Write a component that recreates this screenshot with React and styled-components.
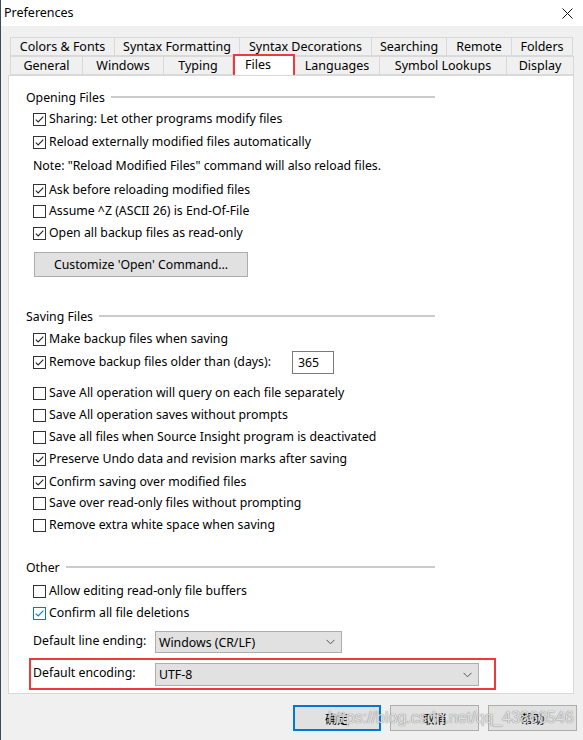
import React from "react";
import styled, { createGlobalStyle } from "styled-components";

const GlobalStyle = createGlobalStyle`
  html, body { margin: 0; padding: 0; background: #f0f0f0; }
  body {
    font-family: "Noto Sans", "Noto Sans CJK SC", sans-serif;
    font-size: 12.3px;
    color: #000;
  }
  * { box-sizing: border-box; }
`;

const Window = styled.div`
  position: relative;
  width: 583px;
  height: 740px;
  background: #f0f0f0;
  border-left: 1px solid #3e4a55;
  display: flex;
  flex-direction: column;
  overflow: hidden;
`;

const TitleBar = styled.div`
  height: 26px;
  background: #fff;
  display: flex;
  align-items: center;
  justify-content: space-between;
  padding: 0 10px 0 3px;
`;

const Title = styled.span`
  font-size: 12.5px;
  line-height: 1;
`;

const Body = styled.div`
  padding: 11px 9px 0 7px;
  display: flex;
  flex-direction: column;
`;

const TabRow = styled.div`
  display: flex;
  align-items: flex-end;
  height: 19px;
  padding-left: 2px;
  position: relative;
  z-index: ${(p) => (p.front ? 2 : 1)};
`;

const Tab = styled.div`
  width: ${(p) => p.w}px;
  height: ${(p) => (p.selected ? 22 : 19)}px;
  margin-right: -1px;
  margin-bottom: ${(p) => (p.selected ? -1 : 0)}px;
  border: 1px solid #d9d9d9;
  border-bottom: ${(p) => (p.selected ? "none" : "1px solid #d9d9d9")};
  background: ${(p) => (p.selected ? "#fff" : "#f0f0f0")};
  position: relative;
  z-index: ${(p) => (p.selected ? 3 : 1)};
  display: flex;
  align-items: center;
  justify-content: ${(p) => (p.selected ? "flex-start" : "center")};
  padding-left: ${(p) => (p.selected ? 12 : 0)}px;
  padding-bottom: ${(p) => (p.selected ? 3 : 0)}px;
  white-space: nowrap;
  font-size: 12.5px;
  color: #000;
`;

const RedTabMark = styled.div`
  position: absolute;
  left: 0;
  top: -1px;
  width: 62px;
  height: 27px;
  border: 2px solid #f03a3a;
  pointer-events: none;
`;

const Panel = styled.div`
  position: relative;
  z-index: 2;
  width: 566px;
  height: 619px;
  background: #fff;
  border: 1px solid #d9d9d9;
  padding: 11px 0 0 17px;
  display: flex;
  flex-direction: column;
`;

const Heading = styled.div`
  display: flex;
  align-items: center;
  width: 409px;
  height: 20px;
  margin-top: ${(p) => p.mt || 0}px;
  font-size: 12.3px;
  &::after {
    content: "";
    flex: 1;
    height: 2px;
    margin-left: 6px;
    margin-top: -1px;
    background: #cbcbcb;
  }
`;

const Row = styled.div`
  display: flex;
  align-items: center;
  height: ${(p) => p.h || 22}px;
  margin-top: ${(p) => p.mt || 0}px;
  padding-left: 7px;
  white-space: nowrap;
  font-size: 12.3px;
`;

const Box = styled.span`
  width: 13px;
  height: 13px;
  flex: none;
  border: 1px solid ${(p) => (p.focus ? "#0078d7" : "#333")};
  background: #fff;
  display: inline-flex;
  align-items: center;
  justify-content: center;
  margin-right: 3px;
`;

const Label = styled.span`
  line-height: 1;
`;

const Check = ({ checked, focus, children }) => (
  <>
    <Box focus={focus}>
      {checked && (
        <svg width="11" height="11" viewBox="0 0 11 11">
          <path
            d="M1.8 5.6 L4.2 8 L9.3 2.6"
            fill="none"
            stroke={focus ? "#0078d7" : "#222"}
            strokeWidth="1.1"
          />
        </svg>
      )}
    </Box>
    <Label>{children}</Label>
  </>
);

const PushButton = styled.button`
  width: ${(p) => p.w}px;
  height: ${(p) => p.h || 26}px;
  margin-left: ${(p) => p.ml || 0}px;
  margin-top: ${(p) => p.mt || 0}px;
  background: #e1e1e1;
  border: ${(p) => (p.primary ? "2px solid #0078d7" : "1px solid #adadad")};
  font-family: "Noto Sans", "Noto Sans CJK SC", sans-serif;
  font-size: 12.3px;
  color: #000;
  padding: 0;
  display: flex;
  align-items: center;
  justify-content: center;
`;

const DaysGrid = styled.div`
  display: grid;
  grid-template-columns: 259px 42px;
  align-items: center;
  height: 23px;
  margin-top: ${(p) => p.mt || 0}px;
  padding-left: 7px;
  font-size: 12.3px;
`;

const DaysLabel = styled.div`
  display: flex;
  align-items: center;
  white-space: nowrap;
`;

const NumberBox = styled.div`
  height: 23px;
  border: 1px solid #7a7a7a;
  background: #fff;
  display: flex;
  align-items: center;
  padding-left: 5px;
  font-size: 12.3px;
`;

const FieldGrid = styled.div`
  display: grid;
  grid-template-columns: 122px ${(p) => p.sw}px;
  align-items: center;
  margin-top: ${(p) => p.mt || 0}px;
  padding-left: ${(p) => p.pl ?? 7}px;
  font-size: 12.3px;
`;

const FieldLabel = styled.span`
  white-space: nowrap;
  margin-top: ${(p) => p.up || 0}px;
`;

const Combo = styled.div`
  height: ${(p) => p.h || 22}px;
  background: #e1e1e1;
  border: 1px solid #adadad;
  display: flex;
  align-items: center;
  justify-content: space-between;
  padding: 0 6px 0 3px;
  font-size: 12.3px;
`;

const Highlight = styled.div`
  margin-top: 5px;
  margin-left: 3px;
  width: 467px;
  height: 32px;
  border: 2px solid #f03a3a;
  padding: 3px 0 0 0;
`;

const Footer = styled.div`
  display: flex;
  justify-content: flex-end;
  gap: 9px;
  margin-top: 11px;
  padding-right: 6px;
`;

const CjkText = styled.span`
  font-family: "Noto Sans CJK SC", sans-serif;
  font-size: 12px;
`;

const Watermark = styled.div`
  position: absolute;
  left: 327px;
  top: 709px;
  font-family: "Liberation Sans", Arial, sans-serif;
  font-size: 16px;
  color: rgba(255, 255, 255, 0.78);
  text-shadow: 0 0 1px rgba(60, 60, 60, 0.55), 0 0 1px rgba(60, 60, 60, 0.4);
  pointer-events: none;
  white-space: nowrap;
`;

const Chevron = () => (
  <svg width="9" height="6" viewBox="0 0 9 6">
    <path d="M0.5 0.8 L4.5 4.8 L8.5 0.8" fill="none" stroke="#555" strokeWidth="1" />
  </svg>
);

const CloseIcon = () => (
  <svg width="11" height="11" viewBox="0 0 11 11">
    <path d="M0.5 0.5 L10.5 10.5 M10.5 0.5 L0.5 10.5" stroke="#111" strokeWidth="1" />
  </svg>
);

const row1 = [
  ["Colors & Fonts", 105],
  ["Syntax Formatting", 126],
  ["Syntax Decorations", 133],
  ["Searching", 76],
  ["Remote", 66],
  ["Folders", 62],
];

const row2 = [
  ["General", 73],
  ["Windows", 82],
  ["Typing", 70],
  ["Files", 63, true],
  ["Languages", 86],
  ["Symbol Lookups", 128],
  ["Display", 68],
];

export default function App() {
  return (
    <>
      <GlobalStyle />
      <Window>
        <TitleBar>
          <Title>Preferences</Title>
          <CloseIcon />
        </TitleBar>
        <Body>
          <TabRow>
            {row1.map(([t, w]) => (
              <Tab key={t} w={w}>
                {t}
              </Tab>
            ))}
          </TabRow>
          <TabRow front>
            {row2.map(([t, w, sel]) => (
              <Tab key={t} w={w} selected={sel}>
                {t}
                {sel && <RedTabMark />}
              </Tab>
            ))}
          </TabRow>
          <Panel>
            <Heading>Opening Files</Heading>
            <Row mt={1}>
              <Check checked>Sharing: Let other programs modify files</Check>
            </Row>
            <Row mt={1}>
              <Check checked>Reload externally modified files automatically</Check>
            </Row>
            <Row mt={2}>
              <Label>Note: "Reload Modified Files" command will also reload files.</Label>
            </Row>
            <Row mt={2}>
              <Check checked>Ask before reloading modified files</Check>
            </Row>
            <Row mt={-1}>
              <Check>Assume ^Z (ASCII 26) is End-Of-File</Check>
            </Row>
            <Row>
              <Check checked>Open all backup files as read-only</Check>
            </Row>
            <PushButton w={214} h={25} ml={8} mt={8}>
              Customize 'Open' Command...
            </PushButton>

            <Heading mt={29}>Saving Files</Heading>
            <Row mt={2}>
              <Check checked>Make backup files when saving</Check>
            </Row>
            <DaysGrid mt={1}>
              <DaysLabel>
                <Check checked>Remove backup files older than (days):</Check>
              </DaysLabel>
              <NumberBox>365</NumberBox>
            </DaysGrid>
            <Row mt={8}>
              <Check>Save All operation will query on each file separately</Check>
            </Row>
            <Row>
              <Check>Save All operation saves without prompts</Check>
            </Row>
            <Row>
              <Check>Save all files when Source Insight program is deactivated</Check>
            </Row>
            <Row>
              <Check checked>Preserve Undo data and revision marks after saving</Check>
            </Row>
            <Row mt={1}>
              <Check checked>Confirm saving over modified files</Check>
            </Row>
            <Row mt={-1}>
              <Check>Save over read-only files without prompting</Check>
            </Row>
            <Row>
              <Check>Remove extra white space when saving</Check>
            </Row>

            <Heading mt={21}>Other</Heading>
            <Row mt={3}>
              <Check>Allow editing read-only file buffers</Check>
            </Row>
            <Row>
              <Check checked focus>
                Confirm all file deletions
              </Check>
            </Row>
            <FieldGrid sw={187} mt={7}>
              <FieldLabel up={-4}>Default line ending:</FieldLabel>
              <Combo>
                <span>Windows (CR/LF)</span>
                <Chevron />
              </Combo>
            </FieldGrid>
            <Highlight>
              <FieldGrid sw={324} pl={2}>
                <FieldLabel up={-4}>Default encoding:</FieldLabel>
                <Combo h={23}>
                  <span>UTF-8</span>
                  <Chevron />
                </Combo>
              </FieldGrid>
            </Highlight>
          </Panel>
        </Body>
        <Footer>
          <PushButton w={88} primary>
            <CjkText>确定</CjkText>
          </PushButton>
          <PushButton w={89}>
            <CjkText>取消</CjkText>
          </PushButton>
          <PushButton w={89}>
            <CjkText>帮助</CjkText>
          </PushButton>
        </Footer>
        <Watermark>https://blog.csdn.net/qq_43866546</Watermark>
      </Window>
    </>
  );
}
